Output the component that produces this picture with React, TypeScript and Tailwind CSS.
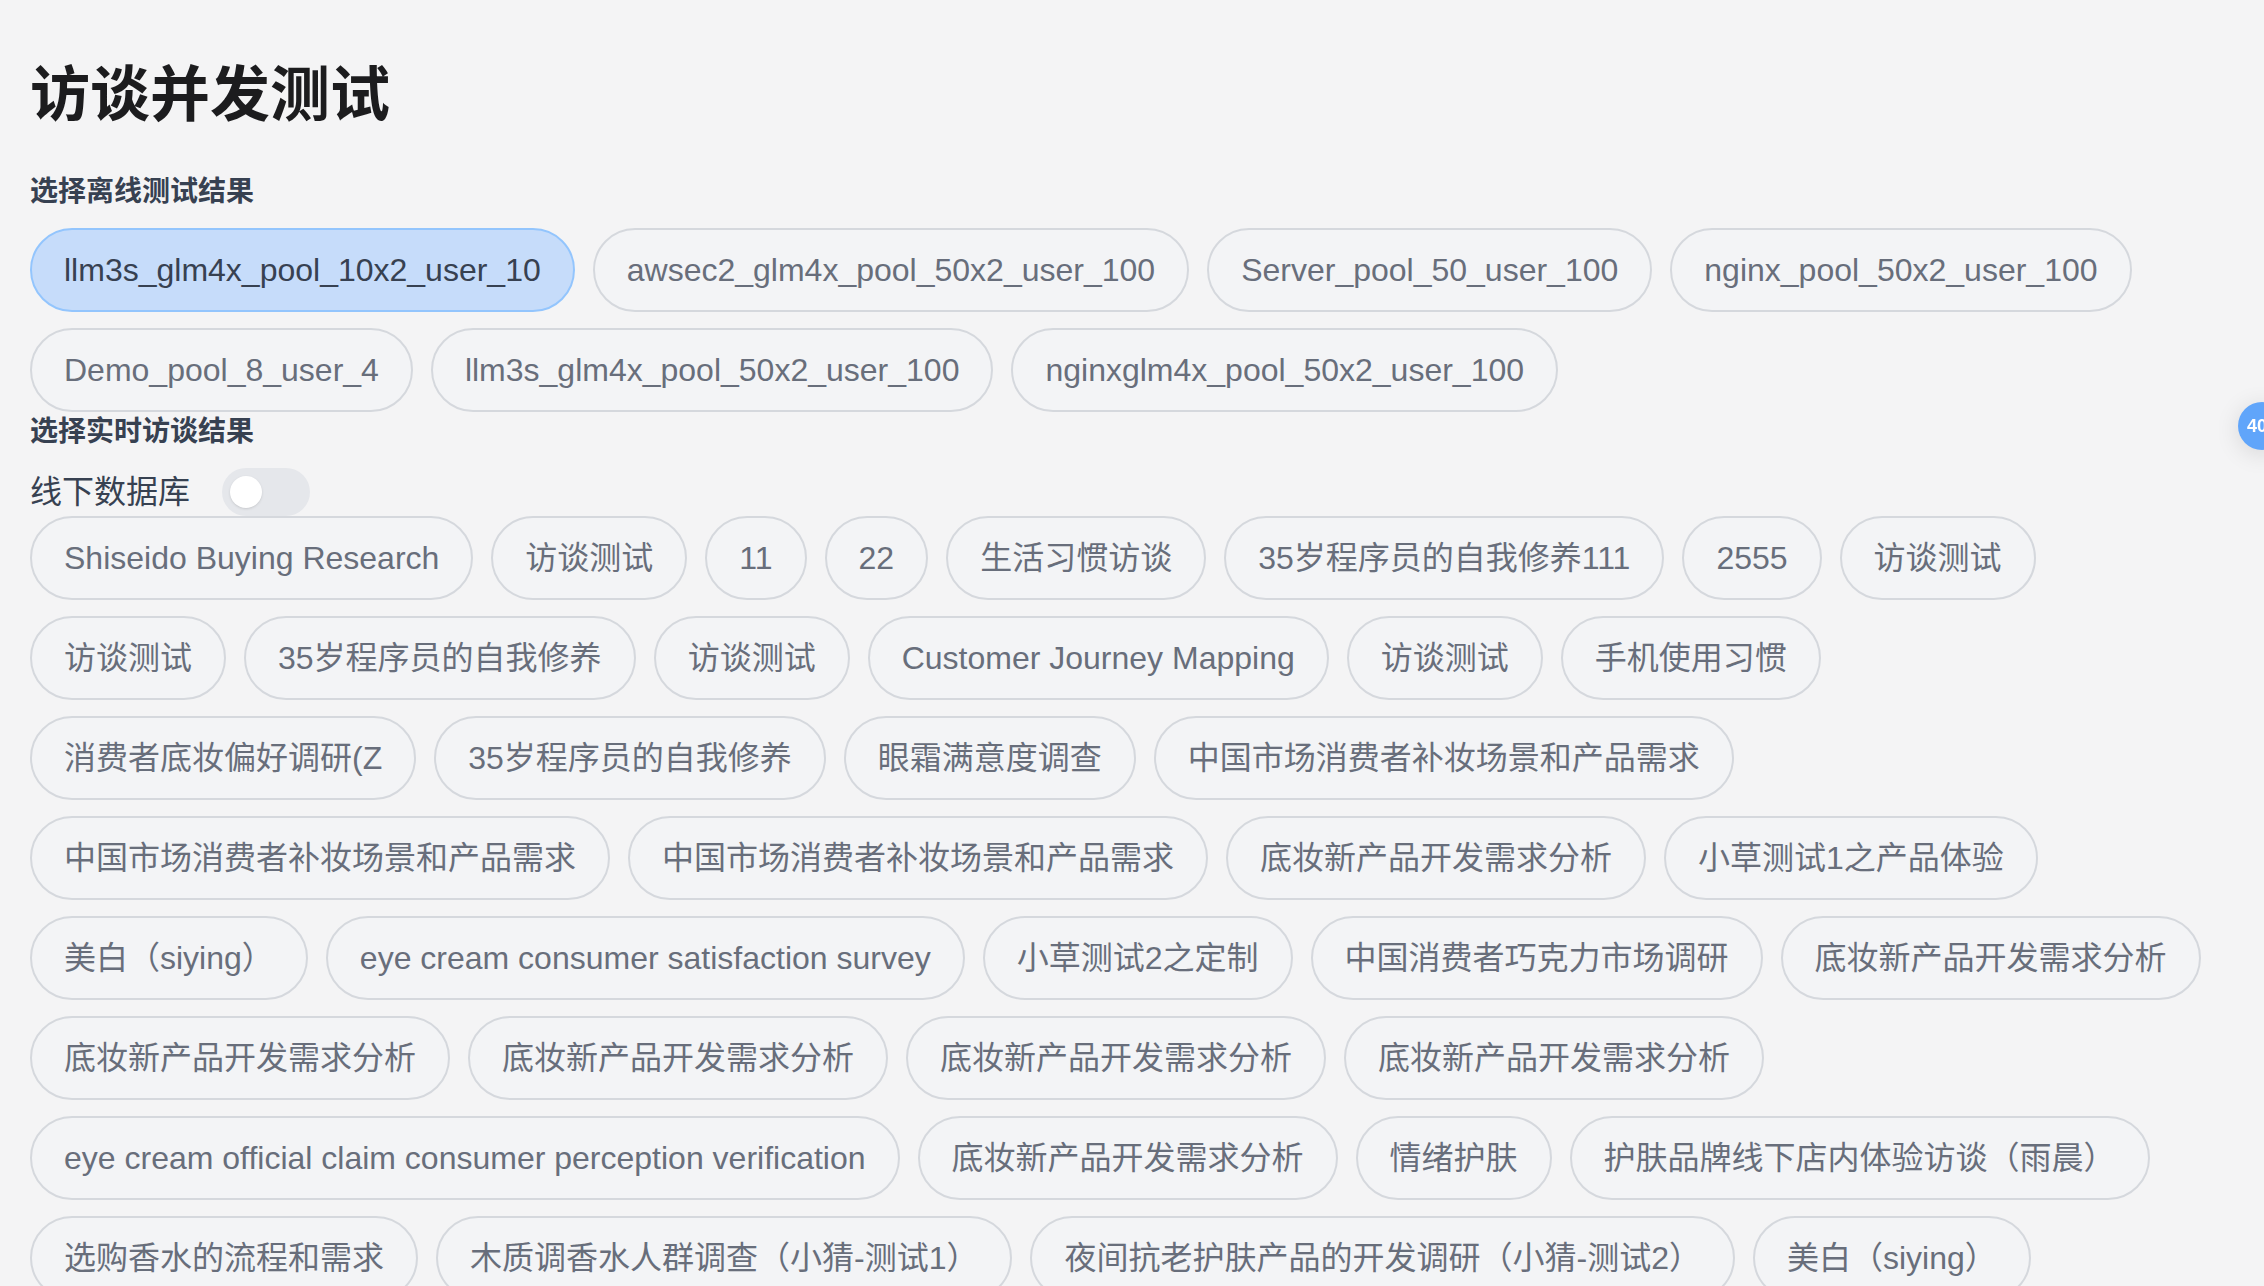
import React from "react";

const offlineResults = [
  "llm3s_glm4x_pool_10x2_user_10",
  "awsec2_glm4x_pool_50x2_user_100",
  "Server_pool_50_user_100",
  "nginx_pool_50x2_user_100",
  "Demo_pool_8_user_4",
  "llm3s_glm4x_pool_50x2_user_100",
  "nginxglm4x_pool_50x2_user_100",
];

const liveResults = [
  "Shiseido Buying Research",
  "访谈测试",
  "11",
  "22",
  "生活习惯访谈",
  "35岁程序员的自我修养111",
  "2555",
  "访谈测试",
  "访谈测试",
  "35岁程序员的自我修养",
  "访谈测试",
  "Customer Journey Mapping",
  "访谈测试",
  "手机使用习惯",
  "消费者底妆偏好调研(Z",
  "35岁程序员的自我修养",
  "眼霜满意度调查",
  "中国市场消费者补妆场景和产品需求",
  "中国市场消费者补妆场景和产品需求",
  "中国市场消费者补妆场景和产品需求",
  "底妆新产品开发需求分析",
  "小草测试1之产品体验",
  "美白（siying）",
  "eye cream consumer satisfaction survey",
  "小草测试2之定制",
  "中国消费者巧克力市场调研",
  "底妆新产品开发需求分析",
  "底妆新产品开发需求分析",
  "底妆新产品开发需求分析",
  "底妆新产品开发需求分析",
  "底妆新产品开发需求分析",
  "eye cream official claim consumer perception verification",
  "底妆新产品开发需求分析",
  "情绪护肤",
  "护肤品牌线下店内体验访谈（雨晨）",
  "选购香水的流程和需求",
  "木质调香水人群调查（小猜-测试1）",
  "夜间抗老护肤产品的开发调研（小猜-测试2）",
  "美白（siying）",
];

function Chip({ label, selected = false }: { label: string; selected?: boolean }) {
  return (
    <button
      type="button"
      className={`mr-[18px] h-[84px] rounded-full border-2 px-8 text-[32px] leading-[48px] whitespace-nowrap ${
        selected
          ? "border-[#93c5fd] bg-[#c6dcfa] text-[#374151]"
          : "border-[#d5d8dd] bg-[#f3f4f6] text-[#686e7b]"
      }`}
    >
      {label}
    </button>
  );
}

export default function App() {
  return (
    <div
      className="min-h-screen bg-[#f4f4f5] pt-[60px] pl-[30px] pr-8 pb-10"
      style={{ fontFamily: '"Liberation Sans", "Noto Sans CJK SC", sans-serif' }}
    >
      {/* Page title */}
      <h1 className="text-[60px] leading-[72px] font-bold text-[#1c1c1e]">访谈并发测试</h1>

      {/* Offline results */}
      <h2 className="mt-10 text-[28px] leading-[40px] font-bold text-[#374151]">选择离线测试结果</h2>
      <div className="mt-4 flex flex-wrap gap-y-4">
        {offlineResults.map((name, i) => (
          <Chip key={name} label={name} selected={i === 0} />
        ))}
      </div>

      {/* Live interview results */}
      <h2 className="text-[28px] leading-[40px] font-bold text-[#374151]">选择实时访谈结果</h2>
      <div className="mt-4 flex items-center gap-8">
        <span className="text-[32px] leading-[48px] text-[#374151]">线下数据库</span>
        <div className="flex h-12 w-[88px] items-center rounded-full bg-[#e5e7eb] pl-2">
          <span className="h-8 w-8 rounded-full bg-white shadow-sm" />
        </div>
      </div>
      <div className="flex flex-wrap gap-y-4">
        {liveResults.map((name, i) => (
          <Chip key={i} label={name} />
        ))}
      </div>

      {/* Floating counter badge */}
      <div className="fixed top-[402px] right-[-22px] flex h-12 w-12 items-center justify-start rounded-full bg-[#60a5fa] pl-[9px] text-[18px] leading-none font-bold text-white shadow-[0_4px_24px_rgba(0,0,0,0.12)]">
        40
      </div>
    </div>
  );
}
